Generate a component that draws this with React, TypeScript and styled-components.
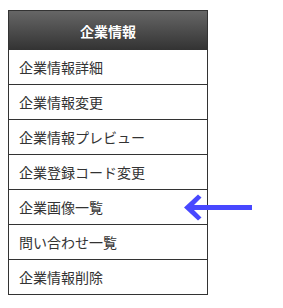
import React from 'react'
import styled, { createGlobalStyle } from 'styled-components'

const GlobalStyle = createGlobalStyle`
  body {
    margin: 0;
    background: #fff;
    font-family: 'Noto Sans CJK JP', 'Noto Sans', sans-serif;
  }
`

const Page = styled.div`
  position: relative;
  padding: 10px 0 0 8px;
  width: 283px;
  height: 308px;
  box-sizing: border-box;
`

const Menu = styled.div`
  width: 200px;
  box-sizing: border-box;
  border: 1px solid #333;
`

const Header = styled.div`
  height: 39px;
  display: flex;
  align-items: center;
  justify-content: center;
  background: linear-gradient(#666, #333);
  color: #fff;
  font-size: 14px;
  font-weight: bold;
  text-shadow: 0 0 1px rgba(0, 0, 0, 0.4);
`

const Item = styled.a<{ $last?: boolean }>`
  display: flex;
  align-items: center;
  height: 34px;
  padding: 0 10px;
  color: #333;
  font-size: 14px;
  text-decoration: none;
  background: #fff;
  border-bottom: ${p => (p.$last ? 'none' : '1px solid #333')};
`

// annotation arrow laid over the menu
const Arrow = styled.svg`
  position: absolute;
  left: 182px;
  top: 193px;
`

const items = [
  '企業情報詳細',
  '企業情報変更',
  '企業情報プレビュー',
  '企業登録コード変更',
  '企業画像一覧',
  '問い合わせ一覧',
  '企業情報削除',
]

export default function App() {
  return (
    <Page>
      <GlobalStyle />
      <Menu>
        <Header>企業情報</Header>
        {items.map((label, i) => (
          <Item key={label} href="#" $last={i === items.length - 1}>
            {label}
          </Item>
        ))}
      </Menu>
      <Arrow width="72" height="28" viewBox="0 0 72 28">
        <rect x="8" y="12" width="62" height="5" fill="#4848ff" />
        <path d="M2 14.5 L16 1.5 L19.5 4.5 L9.5 14.5 L19.5 24.5 L16 27.5 Z" fill="#4848ff" />
      </Arrow>
    </Page>
  )
}
